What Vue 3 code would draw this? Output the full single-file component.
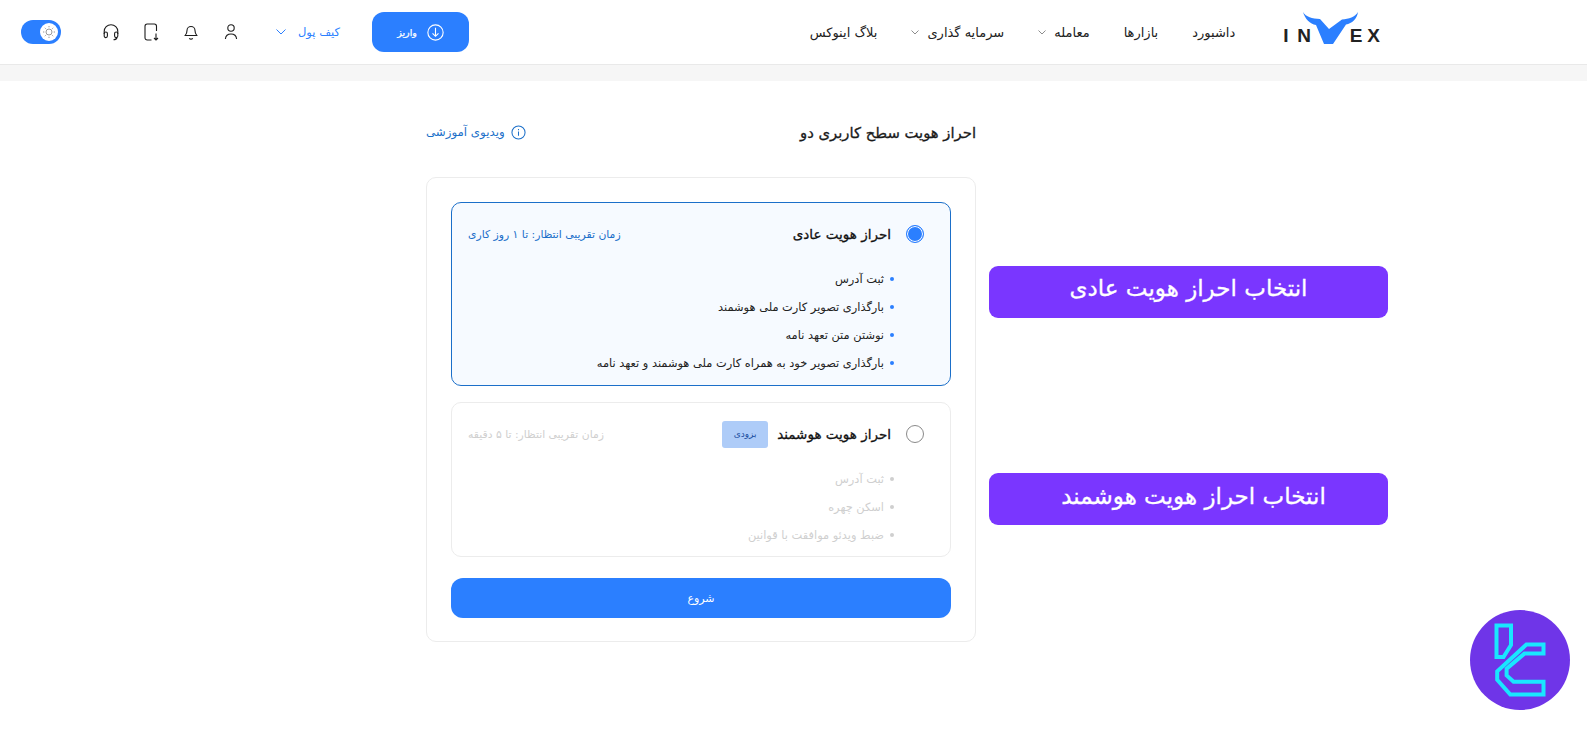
<script setup>
const navItems = [
  { label: 'بلاگ اینوکس', caret: false },
  { label: 'سرمایه گذاری', caret: true },
  { label: 'معامله', caret: true },
  { label: 'بازارها', caret: false },
  { label: 'داشبورد', caret: false }
]

const options = [
  {
    title: 'احراز هویت عادی',
    wait: 'زمان تقریبی انتظار: تا ۱ روز کاری',
    active: true,
    steps: [
      'ثبت آدرس',
      'بارگذاری تصویر کارت ملی هوشمند',
      'نوشتن متن تعهد نامه',
      'بارگذاری تصویر خود به همراه کارت ملی هوشمند و تعهد نامه'
    ]
  },
  {
    title: 'احراز هویت هوشمند',
    wait: 'زمان تقریبی انتظار: تا ۵ دقیقه',
    badge: 'بزودی',
    active: false,
    steps: ['ثبت آدرس', 'اسکن چهره', 'ضبط ویدئو موافقت با قوانین']
  }
]
</script>

<template>
  <div class="page">
    <header class="topbar">
      <div class="tools">
        <div class="toggle">
          <span class="knob">
            <svg width="14" height="14" viewBox="0 0 14 14" fill="none" stroke="#9a9a9a" stroke-width="1">
              <circle cx="7" cy="7" r="3" />
              <path d="M7 1v1.300M7 11.700V13M1 7h1.300M11.700 7H13M2.800 2.800l.9.9M10.300 10.300l.9.9M2.800 11.200l.9-.9M10.300 3.700l.9-.9" />
            </svg>
          </span>
        </div>
        <div class="icons">
          <svg width="18" height="18" viewBox="0 0 18 18" fill="none" stroke="#1c1c1c" stroke-width="1.100">
            <path d="M2.200 11V8.500a6.800 6.800 0 0 1 13.600 0V11" />
            <rect x="2.200" y="9" width="3.200" height="5.600" rx="1.600" />
            <rect x="12.600" y="9" width="3.200" height="5.600" rx="1.600" />
            <path d="M15 14.500c-.4 1.500-1.700 2.200-3.500 2.200" />
          </svg>
          <svg width="18" height="18" viewBox="0 0 18 18" fill="none" stroke="#1c1c1c" stroke-width="1.100">
            <path d="M14.500 8V3.200A2.200 2.200 0 0 0 12.300 1H5.200A2.200 2.200 0 0 0 3 3.200v11.600A2.200 2.200 0 0 0 5.200 17h4.300" />
            <path d="M14 10.500V17M12 15l2 2 2-2" />
          </svg>
          <svg width="18" height="18" viewBox="0 0 18 18" fill="none" stroke="#1c1c1c" stroke-width="1.100">
            <path d="M5 7.500a4 4 0 0 1 8 0c0 2.600.6 3.600 1.800 5H3.200C4.400 11.100 5 10.100 5 7.500Z" />
            <path d="M7.300 15.200a2 2 0 0 0 3.400 0" />
          </svg>
          <svg width="18" height="18" viewBox="0 0 18 18" fill="none" stroke="#1c1c1c" stroke-width="1.100">
            <circle cx="9" cy="5" r="3.200" />
            <path d="M3.400 16c.3-3.200 2.700-5 5.600-5s5.300 1.800 5.600 5" />
          </svg>
        </div>
        <div class="wallet">
          <svg width="10" height="6" viewBox="0 0 10 6" fill="none" stroke="#2b7fff" stroke-width="1">
            <path d="M.5.500 5 5 9.500.500" />
          </svg>
          <span>کیف پول</span>
        </div>
        <button class="deposit">
          <span>واریز</span>
          <svg width="17" height="17" viewBox="0 0 20 20" fill="none" stroke="#fff" stroke-width="1.300">
            <circle cx="10" cy="10" r="9" />
            <path d="M10 4.500v10M6.500 11l3.500 3.500 3.500-3.500" />
          </svg>
        </button>
      </div>

      <div class="nav-side">
        <nav class="nav">
          <a v-for="item in navItems" :key="item.label" class="nav-item">
            <svg v-if="item.caret" width="8" height="5" viewBox="0 0 8 5" fill="none" stroke="#8d8d8d" stroke-width="1">
              <path d="M.5.500 4 4 7.500.500" />
            </svg>
            <span>{{ item.label }}</span>
          </a>
        </nav>
        <div class="brand">
          <span class="brand-text in">IN</span>
          <svg class="brand-mark" width="56" height="32" viewBox="0 0 56 32">
            <path fill="#2b7fff" d="M0 0C3 5 9 6.500 17 7l9 10L39 7.500C46 7 52 5 55 0c-1 7-6 11.500-12 12.500L30 32h-9L13 13C7 12 2 7 0 0Z" />
          </svg>
          <span class="brand-text ex">EX</span>
        </div>
      </div>
    </header>
    <div class="band"></div>

    <main class="content">
      <section class="form-col">
        <div class="heading">
          <a class="video-link">
            <span>ویدیوی آموزشی</span>
            <svg width="15" height="15" viewBox="0 0 16 16" fill="none" stroke="#1b6fc9" stroke-width="1.100">
              <circle cx="8" cy="8" r="7" />
              <path d="M8 7v4.500M8 4.300v1.200" />
            </svg>
          </a>
          <h1>احراز هویت سطح کاربری دو</h1>
        </div>

        <div class="card">
          <div v-for="opt in options" :key="opt.title" class="option" :class="{ active: opt.active }">
            <div class="option-head">
              <span class="wait">{{ opt.wait }}</span>
              <div class="option-title">
                <span v-if="opt.badge" class="badge">{{ opt.badge }}</span>
                <strong>{{ opt.title }}</strong>
                <span class="radio"></span>
              </div>
            </div>
            <ul class="steps">
              <li v-for="step in opt.steps" :key="step">{{ step }}</li>
            </ul>
          </div>
          <button class="start">شروع</button>
        </div>
      </section>

      <aside class="notes">
        <div class="note">انتخاب احراز هویت عادی</div>
        <div class="note">انتخاب احراز هویت هوشمند</div>
      </aside>
    </main>

    <div class="watermark">
      <svg width="100" height="100" viewBox="0 0 100 100" fill="none" stroke="#19e6ff" stroke-width="4">
        <circle cx="50" cy="50" r="50" fill="#6f35e8" stroke="none" />
        <path d="M26.500 15.400H41V35L33.500 47h-7V15.400Z" />
        <path d="M73.500 34.600H56.400L27.200 61.400v8.400L40.300 84.600h33.200V71.800H43.600l-7-6.400v-6.700l17.800-15.100h19.100v-9Z" />
      </svg>
    </div>
  </div>
</template>

<style>
html,
body {
  margin: 0;
  background: #fff;
}
</style>

<style scoped>
.page {
  position: relative;
  height: 730px;
  overflow: hidden;
  background: #fff;
  font-family: "DejaVu Sans", sans-serif;
  color: #1a1a1a;
}

.topbar {
  display: flex;
  justify-content: space-between;
  align-items: center;
  height: 64px;
  padding: 0 202px 0 21px;
  border-bottom: 1px solid #e9e9e9;
}
.band {
  height: 16px;
  background: #f6f6f6;
}

.tools,
.icons,
.wallet,
.deposit,
.nav-side,
.nav,
.nav-item {
  display: flex;
  align-items: center;
}
.toggle {
  display: flex;
  align-items: center;
  justify-content: flex-end;
  width: 40px;
  height: 24px;
  padding-right: 3px;
  box-sizing: border-box;
  border-radius: 12px;
  background: #2b7fff;
}
.knob {
  display: flex;
  align-items: center;
  justify-content: center;
  width: 18px;
  height: 18px;
  border-radius: 50%;
  background: #fff;
}
.icons {
  gap: 22px;
  margin-left: 41px;
}
.wallet {
  gap: 12px;
  margin-left: 36px;
  color: #2b7fff;
  font-size: 11.500px;
}
.deposit {
  justify-content: center;
  gap: 10px;
  width: 97px;
  height: 40px;
  margin-left: 32px;
  border: 0;
  border-radius: 12px;
  background: #2b7fff;
  color: #fff;
  font-family: inherit;
  font-size: 9.500px;
  -webkit-text-stroke: 0.25px #fff;
}

.nav {
  gap: 34px;
  font-size: 13px;
}
.nav-item {
  gap: 8px;
  color: #222;
}
.brand {
  display: flex;
  align-items: flex-end;
  height: 32px;
  margin-left: 48px;
  margin-bottom: 8px;
}
.brand-text {
  font-family: "Liberation Sans", sans-serif;
  font-size: 19px;
  line-height: 16px;
  font-weight: 700;
  color: #222;
}
.brand-text.in {
  letter-spacing: 8.700px;
}
.brand-text.ex {
  letter-spacing: 5px;
}
.brand-mark {
  position: relative;
  margin: 0 -9px 0 -17px;
}

.content {
  display: flex;
  align-items: flex-start;
  gap: 13px;
  padding-left: 426px;
}
.form-col {
  width: 550px;
}
.heading {
  display: flex;
  justify-content: space-between;
  align-items: center;
  height: 30px;
  margin-top: 36px;
  margin-bottom: 30px;
}
.heading h1 {
  margin: 0;
  direction: rtl;
  font-size: 14.800px;
  font-weight: 400;
  -webkit-text-stroke: 0.3px #1a1a1a;
}
.video-link {
  display: flex;
  align-items: center;
  gap: 6px;
  color: #1b6fc9;
  font-size: 11.800px;
}

.card {
  display: flex;
  flex-direction: column;
  gap: 16px;
  box-sizing: border-box;
  width: 550px;
  height: 465px;
  padding: 24px;
  border: 1px solid #ececec;
  border-radius: 10px;
}
.option {
  flex: none;
  height: 153px;
  padding: 0 26px 0 16px;
  border: 1px solid #ececec;
  border-radius: 10px;
  color: #cfcfcf;
}
.option.active {
  height: 182px;
  border-color: #1b6fc9;
  background: #f6faff;
  color: #222;
}
.option-head {
  display: flex;
  justify-content: space-between;
  align-items: center;
  height: 62px;
}
.wait {
  direction: rtl;
  font-size: 10.800px;
}
.option.active .wait {
  color: #1b6fc9;
}
.option-title {
  display: flex;
  align-items: center;
}
.option-title strong {
  direction: rtl;
  color: #111;
  font-size: 13.500px;
  font-weight: 400;
  -webkit-text-stroke: 0.3px #111;
}
.badge {
  display: flex;
  align-items: center;
  justify-content: center;
  width: 46px;
  height: 27px;
  margin-right: 9px;
  border-radius: 3px;
  background: #aeccf8;
  color: #1b4fa0;
  font-size: 9px;
}
.radio {
  box-sizing: border-box;
  width: 18px;
  height: 18px;
  margin-left: 15px;
  border: 1px solid #8a8a8a;
  border-radius: 50%;
}
.option.active .radio {
  border: 1px solid #2b7fff;
  background: #2b7fff;
  box-shadow: inset 0 0 0 1px #fff;
}
.steps {
  display: flex;
  flex-direction: column;
  gap: 10px;
  margin: 5px 0 0;
  padding: 0 30px 0 0;
  list-style: none;
  direction: rtl;
  font-size: 11.400px;
  line-height: 18px;
}
.steps li {
  display: flex;
  align-items: center;
  gap: 6px;
}
.steps li::before {
  content: "";
  width: 4px;
  height: 4px;
  border-radius: 50%;
  background: #cfcfcf;
}
.option.active .steps li::before {
  background: #2b7fff;
}
.start {
  flex: none;
  height: 40px;
  margin-top: 5px;
  border: 0;
  border-radius: 12px;
  background: #2b7fff;
  color: #fff;
  font-family: inherit;
  font-size: 11px;
}

.notes {
  display: flex;
  flex-direction: column;
  gap: 155px;
  padding-top: 185px;
}
.note {
  display: flex;
  align-items: center;
  justify-content: center;
  width: 399px;
  height: 52px;
  padding-bottom: 8px;
  box-sizing: border-box;
  border-radius: 9px;
  background: #7a36ff;
  color: #fff;
  direction: rtl;
  font-size: 23px;
  -webkit-text-stroke: 0.3px #fff;
}
.note:last-child {
  padding-left: 10px;
  padding-bottom: 6px;
}

.watermark {
  position: absolute;
  left: 1470px;
  top: 610px;
  line-height: 0;
}
</style>
